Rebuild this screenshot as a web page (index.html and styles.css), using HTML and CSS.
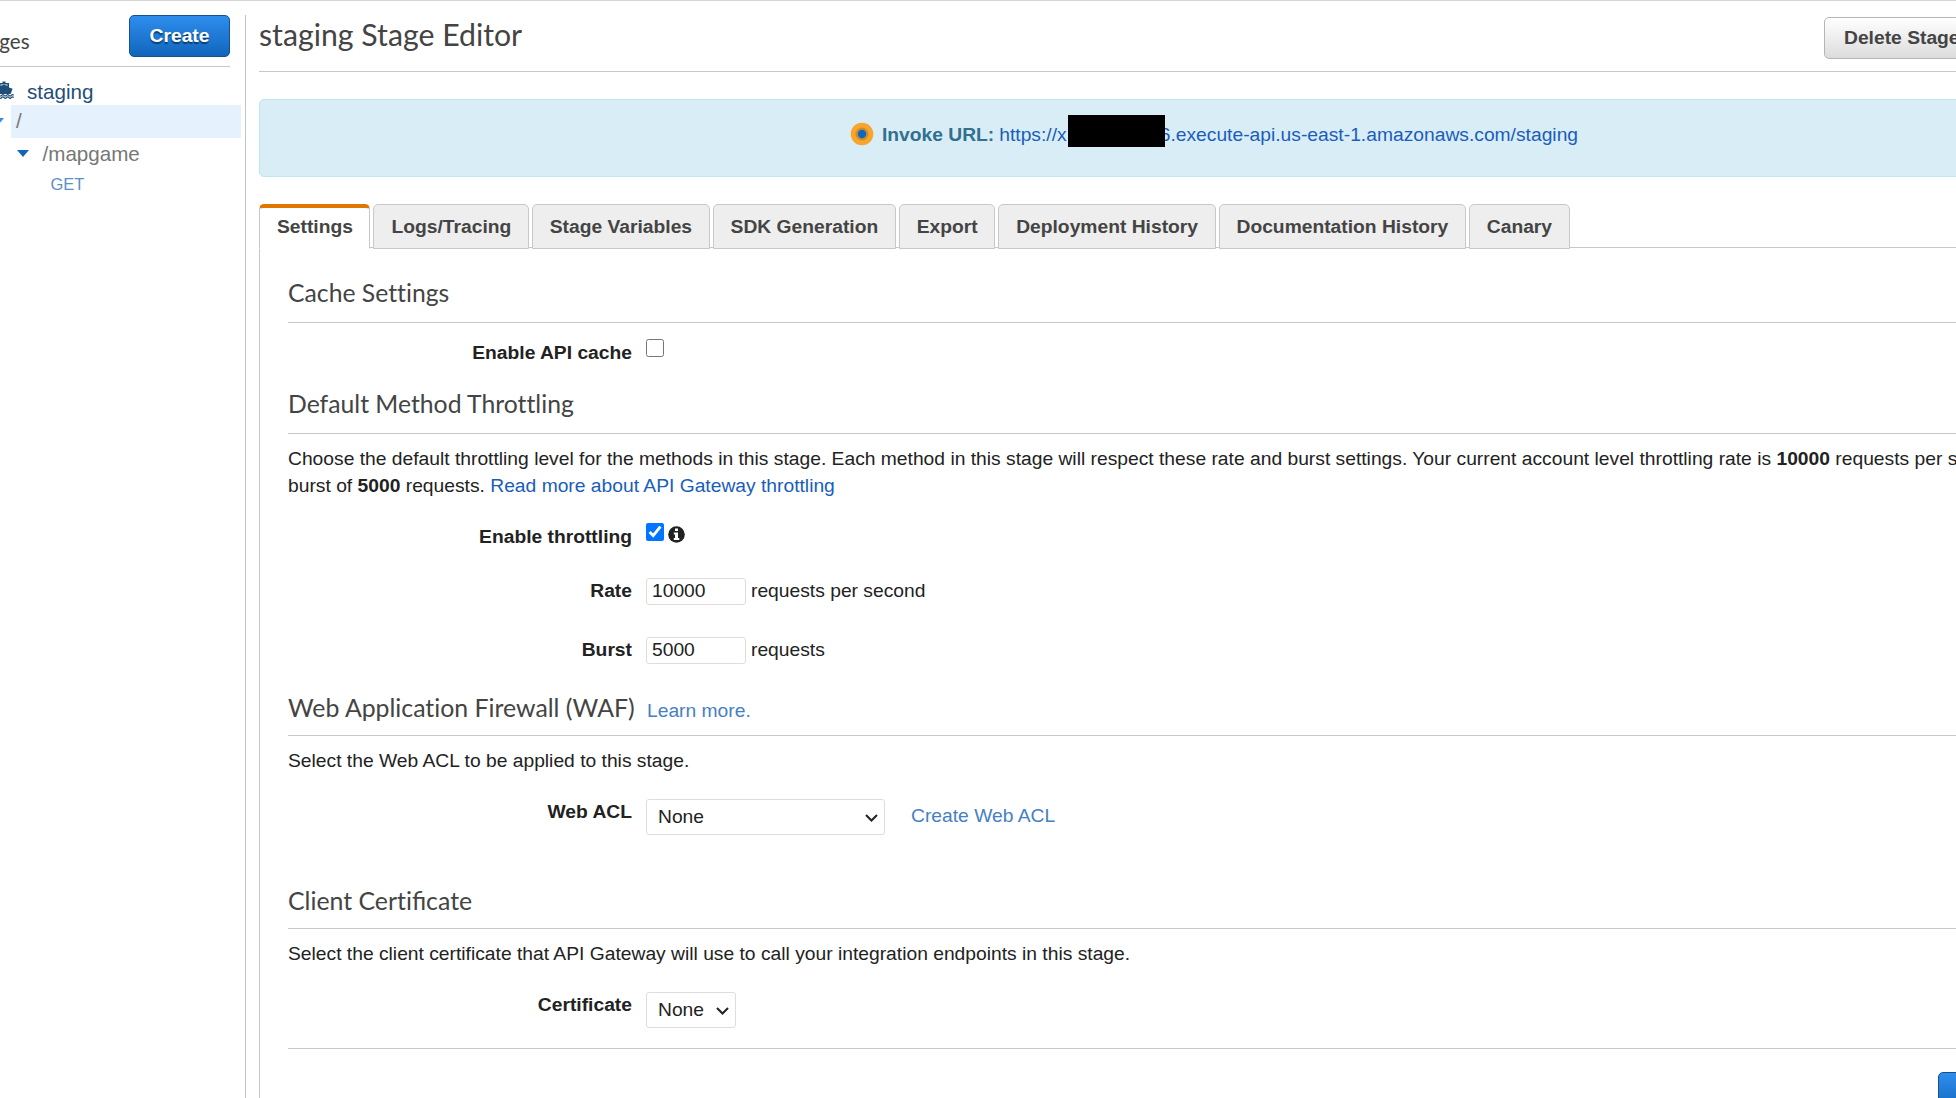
FILE: index.html
```html
<!DOCTYPE html>
<html lang="en">
<head>
<meta charset="utf-8">
<title>staging Stage Editor</title>
<link rel="stylesheet" href="styles.css">
</head>
<body>
<div class="app">
  <aside class="sidebar">
    <div class="sidebar-head">
      <span class="sidebar-title">Stages</span>
      <button class="btn btn-primary create">Create</button>
    </div>
    <div class="tree">
      <div class="node node-stage">
        <svg class="ship" viewBox="0 0 20 18" width="20" height="18"><path fill="currentColor" d="M8.500 .5h3V2h3.500v4.500l3.600 1.200-2 5.300H3.400L1.400 7.700 5 6.500V2h3.500zM6.500 3.500v1.200L10 3.800l3.500.9V3.500z"/><path fill="none" stroke="currentColor" stroke-width="1.200" d="M.5 14.300q1.200 1.400 2.400 0t2.400 0 2.400 0 2.400 0 2.400 0 2.400 0 2.400 0 2.400 0M.5 16.600q1.200 1.400 2.400 0t2.400 0 2.400 0 2.400 0 2.400 0 2.400 0 2.400 0 2.400 0"/></svg>
        <span>staging</span>
      </div>
      <div class="node node-root"><i class="caret caret-light"></i><span class="selected">/</span></div>
      <div class="node node-resource"><i class="caret"></i><span>/mapgame</span></div>
      <div class="node node-method">GET</div>
    </div>
  </aside>
  <main class="main">
    <header class="header">
      <h1>staging Stage Editor</h1>
      <button class="btn btn-default">Delete Stage</button>
    </header>
    <div class="alert">
      <svg class="pulse" viewBox="0 0 24 24" width="24" height="24"><circle cx="12" cy="12" r="11.300" fill="#f9a42a"/><circle cx="12" cy="12" r="6.500" fill="#c98d2f"/><circle cx="12" cy="12" r="4.200" fill="#1166bb"/></svg>
      <strong>Invoke URL:</strong>
      <a class="url" href="#">https://x<span class="mask"></span>6.execute-api.us-east-1.amazonaws.com/staging</a>
    </div>
    <nav class="tabs">
      <a class="tab active">Settings</a>
      <a class="tab">Logs/Tracing</a>
      <a class="tab">Stage Variables</a>
      <a class="tab">SDK Generation</a>
      <a class="tab">Export</a>
      <a class="tab">Deployment History</a>
      <a class="tab">Documentation History</a>
      <a class="tab">Canary</a>
    </nav>
    <section class="panel">
      <h2>Cache Settings</h2>
      <div class="row row-cache"><label>Enable API cache</label><input type="checkbox"></div>

      <h2>Default Method Throttling</h2>
      <p>Choose the default throttling level for the methods in this stage. Each method in this stage will respect these rate and burst settings. Your current account level throttling rate is <b>10000</b> requests per second with a<br>burst of <b>5000</b> requests. <a href="#">Read more about API Gateway throttling</a></p>
      <div class="row row-throttle"><label>Enable throttling</label><input type="checkbox" checked>
        <svg class="info" viewBox="0 0 17 17" width="17" height="17"><circle cx="8.500" cy="8.500" r="8.300" fill="#222"/><path fill="#fff" d="M7 2.500h3v2.500H7zM5.800 6.500H10v5.400h1.300V14H5.800v-2.100H7V8.600H5.800z"/></svg>
      </div>
      <div class="row row-rate"><label>Rate</label><input class="field" type="text" value="10000"><span class="unit">requests per second</span></div>
      <div class="row row-burst"><label>Burst</label><input class="field" type="text" value="5000"><span class="unit">requests</span></div>

      <h2 class="low">Web Application Firewall (WAF) <a class="learn" href="#">Learn more.</a></h2>
      <p>Select the Web ACL to be applied to this stage.</p>
      <div class="row row-acl"><label>Web ACL</label>
        <div class="select select-wide"><select><option>None</option></select><svg class="chevron" viewBox="0 0 13 8" width="13" height="8"><path d="M1 1l5.500 5.500L12 1"/></svg></div>
        <a class="create-acl" href="#">Create Web ACL</a>
      </div>

      <h2 class="low">Client Certi<span class="liga">fi</span>cate</h2>
      <p>Select the client certificate that API Gateway will use to call your integration endpoints in this stage.</p>
      <div class="row row-cert"><label>Certificate</label>
        <div class="select select-narrow"><select><option>None</option></select><svg class="chevron" viewBox="0 0 13 8" width="13" height="8"><path d="M1 1l5.500 5.500L12 1"/></svg></div>
      </div>
      <footer class="actions"><button class="btn btn-primary">Save Changes</button></footer>
    </section>
  </main>
</div>
</body>
</html>
```
FILE: styles.css
```css
* { box-sizing: border-box; }

html, body { height: 100%; margin: 0; overflow: hidden; }

body {
  border-top: 1px solid #d5d5d5;
  background: #fff;
  color: #222;
  font: 19.25px/27px "Liberation Sans", Arial, sans-serif;
}

a { color: #1a5dba; text-decoration: none; }

.app {
  display: flex;
  width: 2227px;
  height: 1097px;
  margin-left: -40px;
  padding-top: 14px;
}

.btn {
  height: 42px;
  padding: 0 19px 2px;
  border-radius: 5px;
  font: bold 19.25px/27px "Liberation Sans", Arial, sans-serif;
  white-space: nowrap;
}

.btn-primary {
  border: 1px solid #15508f;
  background: linear-gradient(#2e8ded, #1166bb);
  color: #fff;
  text-shadow: 0 2px 1px #0b3e73;
}

.btn-default {
  border: 1px solid #b5b5b5;
  background: linear-gradient(#fff, #dcdcdc);
  color: #444;
}

/* Sidebar */
.sidebar {
  width: 286px;
  border-right: 1px solid #c4c4c4;
}

.sidebar-head {
  display: flex;
  justify-content: space-between;
  width: 270px;
  height: 52px;
  border-bottom: 1px solid #c8c8c8;
}

.sidebar-title {
  padding: 14px 0 0 11px;
  font: 20.6px/25px Lato, sans-serif;
  color: #444;
}

.create { width: 101px; padding: 0 0 2px; }

.tree { padding-top: 9px; font-size: 20.6px; line-height: 33px; color: #777; }
.node { display: flex; align-items: center; }
.node-stage { height: 29px; padding: 1px 0 0 34px; gap: 13px; color: #1f4e79; }
.node-stage span { padding-top: 1px; }
.ship { margin-top: -2px; }
.node-root { height: 33px; padding-left: 32px; }
.selected { width: 230px; height: 33px; margin-left: 7px; padding-left: 5px; line-height: 32px; background: #e5f1fd; }
.node-resource { height: 31px; padding-left: 57px; gap: 13.5px; }
.node-method { height: 31px; padding-left: 90.5px; font-size: 16.5px; color: #5c8fc4; }

.caret {
  flex: none;
  width: 12px;
  height: 7px;
  background: #1166bb;
  clip-path: polygon(0 0, 100% 0, 50% 100%);
}
.caret-light { background: #2e8ded; }

/* Main column */
.main { width: 1908px; margin-left: 13px; }

.header {
  display: flex;
  height: 57px;
  border-bottom: 1px solid #c8c8c8;
}
.header h1 {
  width: 1565px;
  margin: 0;
  padding-top: 1px;
  font: 30.25px/36px Lato, sans-serif;
  color: #444;
}
.header .btn { margin-top: 2px; }

.alert {
  display: flex;
  justify-content: center;
  height: 78px;
  margin-top: 27px;
  padding: 21px 0 0 2px;
  border: 1px solid #bce8f1;
  border-radius: 5px;
  background: #d9edf7;
  color: #31708f;
}
.pulse { margin: 1px 8px 0 0; }
.url { margin-left: 5px; }
.mask {
  display: inline-block;
  position: relative;
  top: -6px;
  width: 97px;
  height: 32px;
  margin: -6px -5px -6px 1px;
  vertical-align: -6px;
  background: #000;
}

/* Tabs */
.tabs {
  display: flex;
  gap: 3px;
  height: 44px;
  margin-top: 27px;
  border-bottom: 1px solid #c8c8c8;
}
.tab {
  height: 45px;
  padding: 8px 16.5px 0 17px;
  border: 1px solid #c8c8c8;
  border-radius: 5px 5px 0 0;
  background: #eee;
  color: #444;
  font-weight: bold;
  white-space: nowrap;
}
.tab.active {
  padding-top: 5px;
  border-top: 4px solid #e07700;
  border-bottom-color: #fff;
  background: #fff;
}

.panel {
  padding: 28px 29px 0 28px;
  border-left: 1px solid #c8c8c8;
}

.panel h2 {
  height: 47px;
  margin: 0;
  padding-top: 1px;
  border-bottom: 1px solid #c8c8c8;
  font: 24.75px/32px Lato, sans-serif;
  font-variant-ligatures: none;
  color: #444;
}
.panel h2.low { padding-top: 2px; font-size: 24.85px; }
.panel h2 .liga { font-variant-ligatures: normal; }
.panel h2 .learn { margin-left: 6px; font: 19.25px/27px "Liberation Sans", Arial, sans-serif; color: #4580c4; }

.panel p { margin: 11px 0 24px; white-space: nowrap; }

.row { display: flex; align-items: flex-start; }
.row label { width: 344px; margin-right: 14px; font-weight: bold; text-align: right; }
.row input[type="checkbox"] { width: 18px; height: 18px; margin: 0; }
.row-cache { height: 48px; margin-top: 16px; }
.row-throttle { height: 54px; }
.row-rate { height: 59px; }
.row-burst { height: 53px; }
.row-acl { height: 84px; }
.row-cert { height: 57px; }

.info { margin: 2.5px 0 0 4px; }

.field {
  width: 100px;
  height: 27px;
  margin-top: 1px;
  padding: 0 4px 2px 5px;
  border: 1px solid #ddd;
  border-radius: 3px;
  font: inherit;
  color: #222;
}
.unit { margin-left: 5px; }

.select { position: relative; height: 36px; margin-top: 1px; }
.select-wide { width: 239px; }
.select-narrow { width: 90px; }
.select select {
  appearance: none;
  width: 100%;
  height: 100%;
  padding: 0 11px 2px;
  border: 1px solid #ddd;
  border-radius: 3px;
  background: #fff;
  font: inherit;
  color: #222;
}
.chevron {
  position: absolute;
  right: 7px;
  top: 15px;
  fill: none;
  stroke: #222;
  stroke-width: 2;
}
.create-acl { margin: 4px 0 0 26px; color: #4580c4; }

.actions {
  display: flex;
  border-top: 1px solid #c8c8c8;
  padding: 23px 0 0 1650px;
}
```
